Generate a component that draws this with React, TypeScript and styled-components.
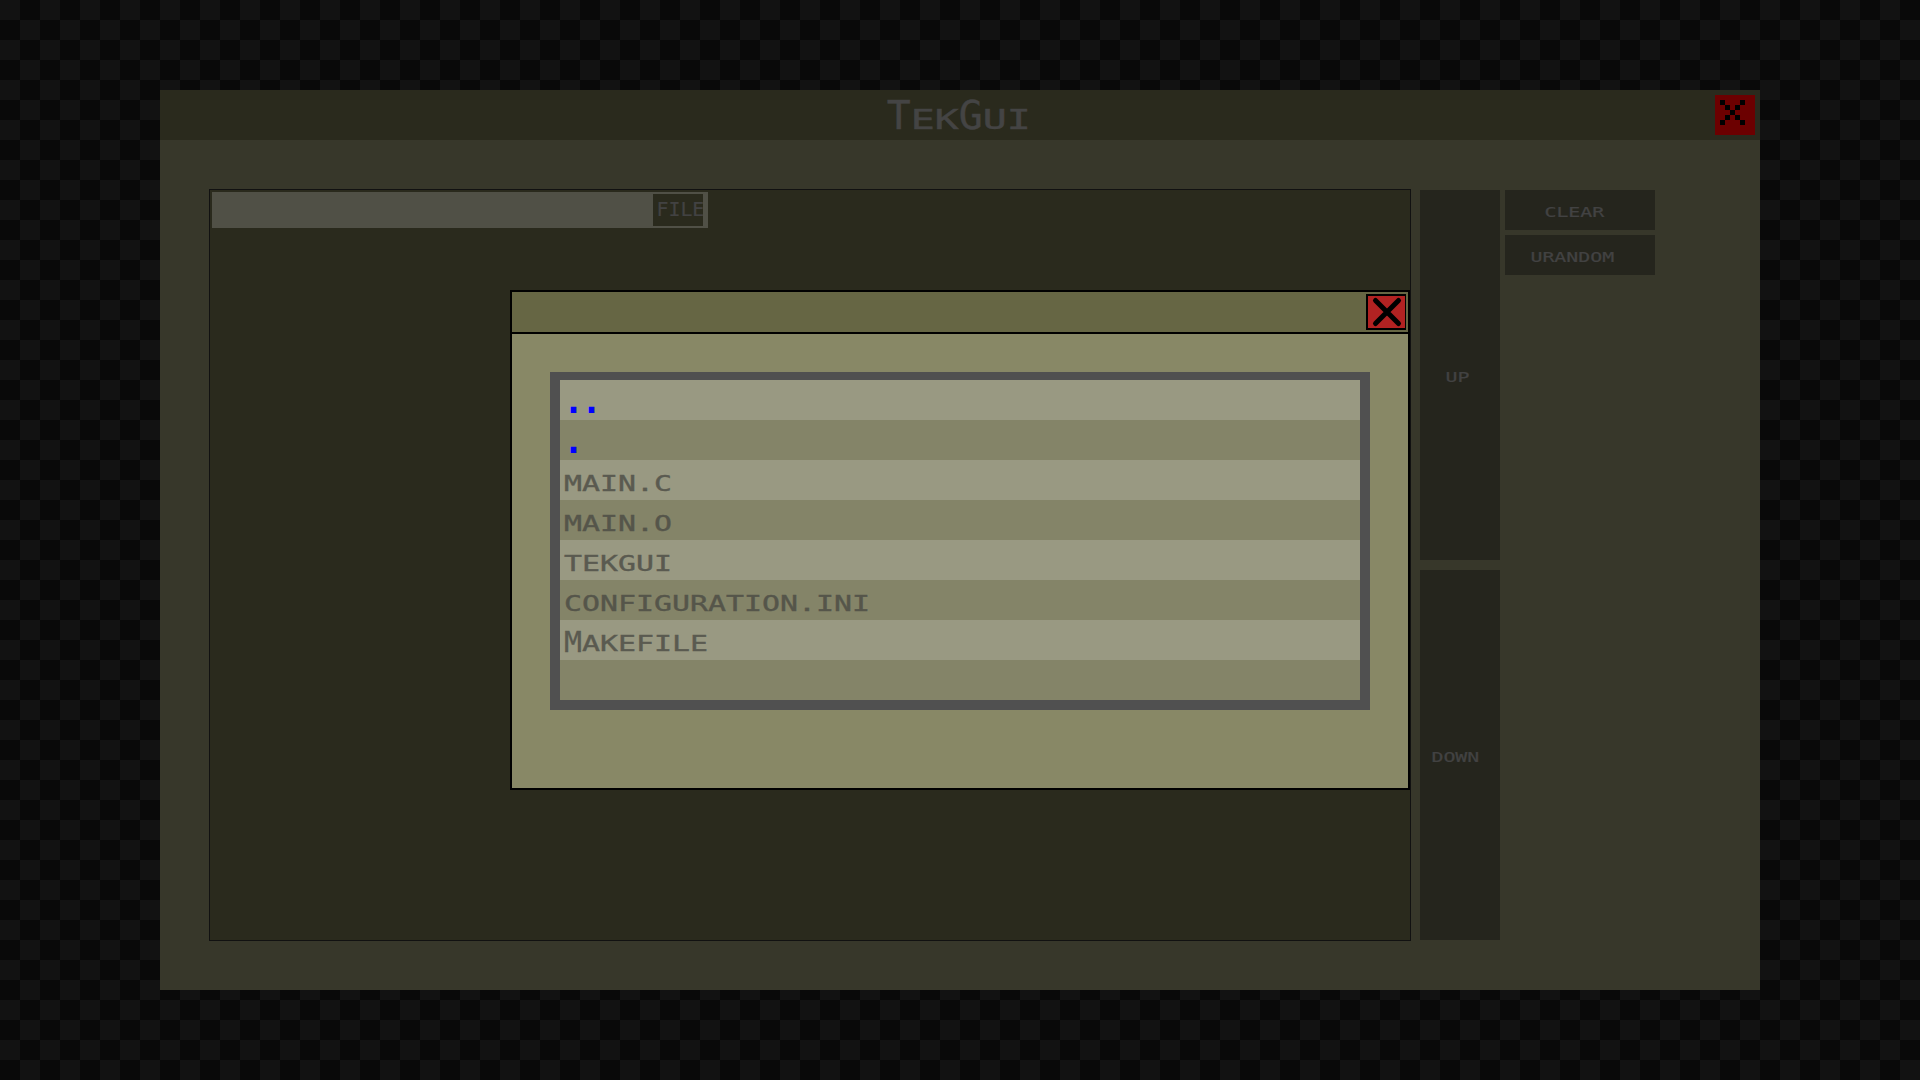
import React from 'react';
import styled, { createGlobalStyle } from 'styled-components';

const GlobalStyle = createGlobalStyle`
  * { box-sizing: border-box; }
  body {
    margin: 0;
    background: repeating-conic-gradient(#090909 0 25%, #121212 0 50%) 0 0 / 40px 40px;
    font-family: 'DejaVu Sans Mono', 'Liberation Mono', monospace;
  }
  button { font-family: inherit; text-align: left; }
`;

/* Terminal lettering: every character fills a cell six units wide and seven
   units high; lowercase letters are drawn as five-unit capitals. */
const Lettering = styled.span<{ $unit: number; $color: string }>`
  display: inline-flex;
  flex: none;
  height: ${p => p.$unit * 7}px;
  color: ${p => p.$color};
  white-space: pre;
`;

const Run = styled.span<{ $unit: number; $count: number; $small: boolean }>`
  display: block;
  flex: none;
  width: ${p => p.$unit * 6 * p.$count}px;
  height: ${p => p.$unit * 7}px;
  font-size: ${p => p.$unit * (p.$small ? 6.859 : 9.602)}px;
  line-height: ${p => p.$unit * (p.$small ? 9.254 : 7.355)}px;
  text-transform: uppercase;
  transform-origin: 0 0;
  transform: translate(${p => -p.$unit * 0.3}px, ${p => (p.$unit === 3 ? 0.75 : p.$unit === 4 ? -0.5 : -0.25)}px)
    scaleX(${p => (p.$small ? 1.453 : 1.038)});
  -webkit-text-stroke: ${p => p.$unit * (p.$small ? 0.12 : 0.1)}px currentColor;
`;

const DotRun = styled(Run)`
  transform: translate(-0.5px, 0.5px) scaleX(1.038);
  -webkit-text-stroke: ${p => p.$unit * 0.6}px currentColor;
`;

function Pixel({ text, unit, color }: { text: string; unit: number; color: string }) {
  const runs = text.match(/[A-Z]+|[^A-Z]+/g) ?? [];
  return (
    <Lettering $unit={unit} $color={color}>
      {runs.map((run, i) => {
        const dots = /^\.+$/.test(run);
        const Part = dots ? DotRun : Run;
        return (
          <Part key={i} $unit={unit} $count={run.length} $small={!dots && !/[A-Z]/.test(run)}>
            {run}
          </Part>
        );
      })}
    </Lettering>
  );
}

const Desktop = styled.div`
  position: relative;
  width: 1920px;
  height: 1080px;
  padding: 90px 160px;
  overflow: hidden;
`;

const Window = styled.main`
  width: 1600px;
  height: 900px;
  background: #37372a;
`;

const Header = styled.header`
  display: grid;
  grid-template-columns: 40px 1fr 40px;
  align-items: center;
  justify-items: center;
  height: 50px;
  padding: 0 5px;
  background: #2a2a1d;
`;

const Title = styled.h1`
  display: flex;
  grid-column: 2;
  margin: 0;
  font-size: 28px;
  font-weight: normal;
`;

const WindowClose = styled.button`
  display: flex;
  align-items: flex-start;
  justify-content: flex-start;
  width: 40px;
  height: 40px;
  padding: 5px;
  border: 0;
  background: #6c0000;
`;

const Workspace = styled.div`
  display: flex;
  align-items: flex-start;
  padding: 49px 0 0 49px;
`;

const Canvas = styled.section`
  width: 1202px;
  height: 752px;
  padding: 2px;
  border: 1px solid #111;
  background: #2a2a1d;
`;

const PathField = styled.div`
  display: flex;
  justify-content: flex-end;
  width: 496px;
  height: 36px;
  padding: 2px 5px 2px 0;
  background: #505046;
`;

const FileButton = styled.button`
  display: flex;
  align-items: center;
  width: 50px;
  height: 32px;
  padding: 0 0 0 4px;
  border: 0;
  overflow: hidden;
  background: #2a2a1d;
`;

const Column = styled.div<{ $gap: number; $margin: number }>`
  display: flex;
  flex-direction: column;
  gap: ${p => p.$gap}px;
  margin: 1px 0 0 ${p => p.$margin}px;
`;

const PanelButton = styled.button<{ $w: number; $h: number; $inset: number }>`
  display: flex;
  align-items: center;
  width: ${p => p.$w}px;
  height: ${p => p.$h}px;
  padding: 0 0 0 ${p => p.$inset}px;
  border: 0;
  background: #25251d;
`;

const Dialog = styled.section`
  position: absolute;
  left: 510px;
  top: 290px;
  width: 900px;
  height: 500px;
  border: 2px solid #000;
  background: #888866;
`;

const DialogBar = styled.div`
  display: flex;
  justify-content: flex-end;
  height: 42px;
  padding: 2px 2px 0;
  border-bottom: 2px solid #000;
  background: #666644;
`;

const DialogClose = styled.button`
  width: 40px;
  height: 36px;
  padding: 0;
  border: 2px solid #000;
  border-right-width: 1px;
  background: #b22222;
  svg { display: block; }
`;

const FileList = styled.ul`
  width: 820px;
  height: 338px;
  margin: 38px 0 0 38px;
  padding: 0;
  border: 10px solid #505050;
  border-top-width: 8px;
  list-style: none;
`;

const FileRow = styled.li`
  height: 40px;
  padding: 10px 0 0 5px;
  font-size: 0;
  line-height: 0;
  background: #848468;
  &:nth-child(odd) { background: #999982; }
`;

const files = ['..', '.', 'main.c', 'main.o', 'tekgui', 'configuration.ini', 'Makefile', ''];
const dim = '#424242';

export default function App() {
  return (
    <Desktop>
      <GlobalStyle />
      <Window>
        <Header>
          <Title><Pixel text="TekGui" unit={4} color="#444444" /></Title>
          <WindowClose aria-label="Close window">
            <svg width="25" height="25" viewBox="0 0 5 5" shapeRendering="crispEdges">
              <path d="M0 0h1v1h-1zM4 0h1v1h-1zM1 1h1v1h-1zM3 1h1v1h-1zM2 2h1v1h-1zM1 3h1v1h-1zM3 3h1v1h-1zM0 4h1v1h-1zM4 4h1v1h-1z" />
            </svg>
          </WindowClose>
        </Header>
        <Workspace>
          <Canvas>
            <PathField>
              <FileButton><Pixel text="FILE" unit={2} color={dim} /></FileButton>
            </PathField>
          </Canvas>
          <Column $gap={10} $margin={9}>
            <PanelButton $w={80} $h={370} $inset={26}><Pixel text="up" unit={2} color={dim} /></PanelButton>
            <PanelButton $w={80} $h={370} $inset={12}><Pixel text="down" unit={2} color={dim} /></PanelButton>
          </Column>
          <Column $gap={5} $margin={5}>
            <PanelButton $w={150} $h={40} $inset={40}><Pixel text="clear" unit={2} color={dim} /></PanelButton>
            <PanelButton $w={150} $h={40} $inset={26}><Pixel text="urandom" unit={2} color={dim} /></PanelButton>
          </Column>
        </Workspace>
      </Window>
      <Dialog>
        <DialogBar>
          <DialogClose aria-label="Close dialog">
            <svg width="37" height="32" viewBox="0 0 37 32">
              <path d="M7.5 4.5L30.5 27.5M30.5 4.5L7.5 27.5" fill="none" stroke="#000" strokeWidth="5" strokeLinecap="round" />
            </svg>
          </DialogClose>
        </DialogBar>
        <FileList>
          {files.map((name, i) => (
            <FileRow key={i}>
              {name && (
                <Pixel
                  text={name}
                  unit={3}
                  color={i < 2 ? '#0000ff' : i % 2 ? '#55554a' : '#5a5a50'}
                />
              )}
            </FileRow>
          ))}
        </FileList>
      </Dialog>
    </Desktop>
  );
}
